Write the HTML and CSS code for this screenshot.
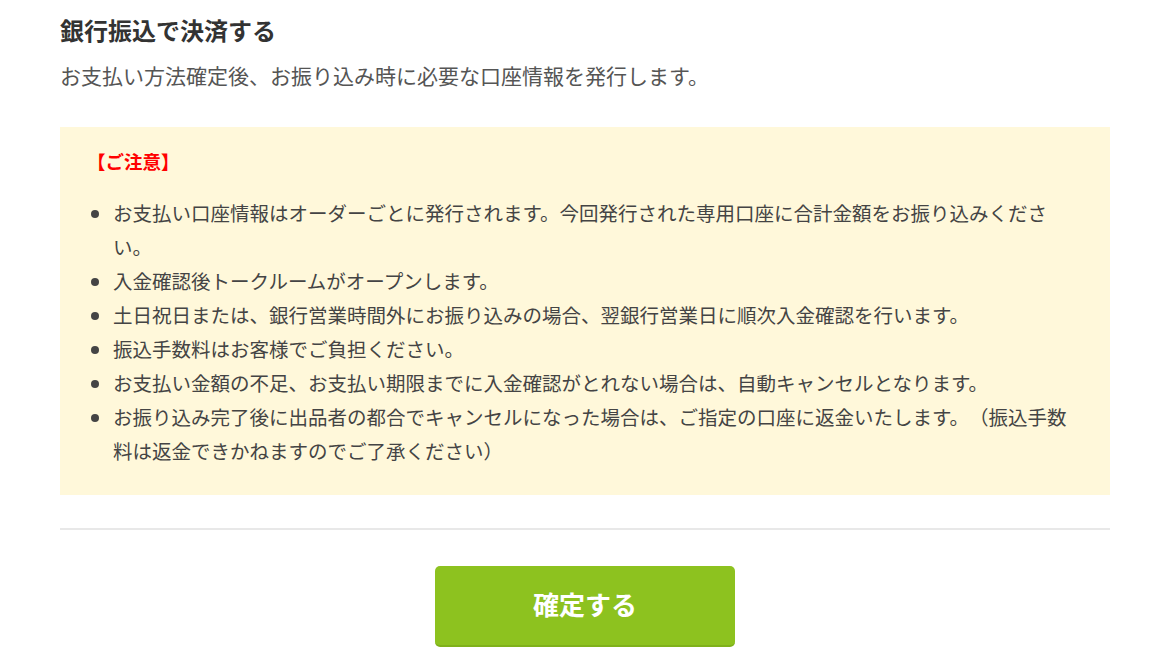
FILE: index.html
```html
<!DOCTYPE html>
<html lang="ja">
<head>
<meta charset="utf-8">
<title>銀行振込で決済する</title>
<link rel="stylesheet" href="styles.css">
</head>
<body>
<main class="page">
  <h2 class="title">銀行振込で決済する</h2>
  <p class="lead">お支払い方法確定後、お振り込み時に必要な口座情報を発行します。</p>
  <section class="notice">
    <h3 class="notice-head">【ご注意】</h3>
    <ul class="notice-list">
      <li>お支払い口座情報はオーダーごとに発行されます。今回発行された専用口座に合計金額をお振り込みください。</li>
      <li>入金確認後トークルームがオープンします。</li>
      <li>土日祝日または、銀行営業時間外にお振り込みの場合、翌銀行営業日に順次入金確認を行います。</li>
      <li>振込手数料はお客様でご負担ください。</li>
      <li>お支払い金額の不足、お支払い期限までに入金確認がとれない場合は、自動キャンセルとなります。</li>
      <li>お振り込み完了後に出品者の都合でキャンセルになった場合は、ご指定の口座に返金いたします。（振込手数料は返金できかねますのでご了承ください）</li>
    </ul>
  </section>
  <hr class="divider">
  <div class="actions">
    <button class="btn-confirm" type="button">確定する</button>
  </div>
</main>
</body>
</html>
```
FILE: styles.css
```css
html, body {
  margin: 0;
  padding: 0;
  background: #ffffff;
}
body {
  font-family: "Noto Sans CJK JP", "Noto Sans", sans-serif;
  color: #444;
  text-spacing-trim: space-all;
}
.page {
  width: 1050px;
  margin: 0 0 0 60px;
  padding-top: 13px;
}
.title {
  margin: 0;
  font-size: 24px;
  line-height: 34px;
  font-weight: 700;
  color: #333;
}
.lead {
  margin: 11px 0 0;
  font-size: 21px;
  line-height: 34px;
  color: #555;
}
.notice {
  margin-top: 35px;
  background: #fff8da;
  padding: 17px 40px 27px 27px;
}
.notice-head {
  margin: 0;
  font-size: 18.5px;
  line-height: 34px;
  font-weight: 700;
  color: #ff0000;
}
.notice-list {
  margin: 18px 0 0;
  padding-left: 26px;
  font-size: 19.5px;
  line-height: 34px;
  color: #444;
}
.notice-list li {
  margin: 0;
}
.divider {
  margin: 33px 0 0;
  border: 0;
  height: 2px;
  background: #e8e8e8;
}
.actions {
  display: flex;
  justify-content: center;
  padding-top: 36px;
}
.btn-confirm {
  width: 300px;
  height: 81px;
  border: 0;
  border-bottom: 2px solid #7fb11a;
  border-radius: 5px;
  background: #8dc21f;
  color: #ffffff;
  font-family: "Noto Sans CJK JP", "Noto Sans", sans-serif;
  font-size: 26px;
  font-weight: 700;
  line-height: 1;
  padding: 0 0 3px;
  cursor: pointer;
}
```
